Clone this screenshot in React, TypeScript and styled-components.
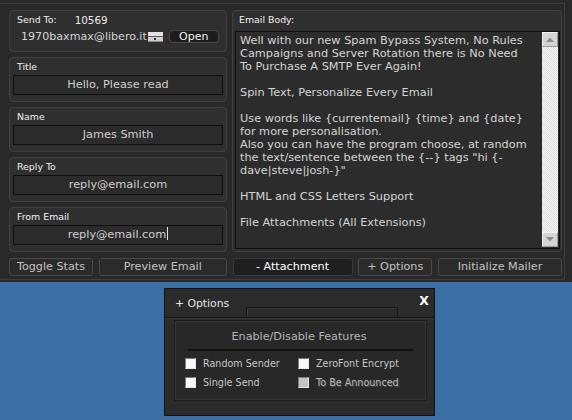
import styled, { createGlobalStyle } from 'styled-components'

const GlobalStyle = createGlobalStyle`
	html, body {
		margin: 0;
		padding: 0;
		background: #3a6ea5;
	}
	body {
		font-family: "DejaVu Sans", Verdana, sans-serif;
	}
	* {
		box-sizing: border-box;
	}
`

const bodyLines = [
	'Well with our new Spam Bypass System, No Rules',
	'Campaigns and Server Rotation there is No Need',
	'To Purchase A SMTP Ever Again!',
	'',
	'Spin Text, Personalize Every Email',
	'',
	'Use words like {currentemail} {time} and {date}',
	'for more personalisation.',
	'Also you can have the program choose, at random',
	'the text/sentence between the {--} tags "hi {-',
	'dave|steve|josh-}"',
	'',
	'HTML and CSS Letters Support',
	'',
	'File Attachments (All Extensions)',
]

const fields = [
	{ label: 'Title', value: 'Hello, Please read' },
	{ label: 'Name', value: 'James Smith' },
	{ label: 'Reply To', value: 'reply@email.com' },
	{ label: 'From Email', value: 'reply@email.com', caret: true },
]

const buttons = [
	{ text: 'Toggle Stats', w: 84 },
	{ text: 'Preview Email', w: 128 },
	{ text: '- Attachment', w: 120, active: true },
	{ text: '+ Options', w: 74 },
	{ text: 'Initialize Mailer', w: 124 },
]

const options = [
	{ text: 'Random Sender' },
	{ text: 'ZeroFont Encrypt' },
	{ text: 'Single Send' },
	{ text: 'To Be Announced', disabled: true },
]

const AddressIcon = () => (
	<svg width='15' height='10' viewBox='0 0 15 10'>
		<rect x='0' y='0' width='15' height='4' fill='#e2e2e2' />
		<rect x='0' y='4' width='15' height='1' fill='#5a5a5a' />
		<rect x='0' y='5' width='15' height='4' fill='#d0d0d0' />
		<rect x='6' y='6' width='2' height='2' fill='#333' />
		<rect x='0' y='9' width='15' height='1' fill='#8a8a8a' />
	</svg>
)

const Arrow = ({ down }: { down?: boolean }) => (
	<svg width='8' height='5' viewBox='0 0 8 5'>
		<polygon points={down ? '0,0 8,0 4,4.5' : '0,5 8,5 4,0.5'} fill='#8c8c8c' />
	</svg>
)

export default function App() {
	return (
		<Desktop>
			<GlobalStyle />
			<Window>
				<Frame>
					<Main>
						<LeftCol>
							<Card $h={42}>
								<SendRow>
									<Label>Send To:</Label>
									<Count>10569</Count>
								</SendRow>
								<AddressRow>
									<Address>1970baxmax@libero.it</Address>
									<AddressIcon />
									<OpenButton>Open</OpenButton>
								</AddressRow>
							</Card>
							{fields.map((f) => (
								<Card key={f.label} $h={45}>
									<Label>{f.label}</Label>
									<Field>
										{f.value}
										{f.caret && <Caret />}
									</Field>
								</Card>
							))}
						</LeftCol>
						<BodyCard>
							<Label>Email Body:</Label>
							<TextArea>
								<BodyText>{bodyLines.join('\n')}</BodyText>
								<ScrollBar>
									<ScrollButton>
										<Arrow />
									</ScrollButton>
									<ScrollTrack />
									<ScrollButton>
										<Arrow down />
									</ScrollButton>
								</ScrollBar>
							</TextArea>
						</BodyCard>
					</Main>
					<ButtonRow>
						{buttons.map((b) => (
							<ActionButton key={b.text} $w={b.w} $active={b.active}>
								{b.text}
							</ActionButton>
						))}
					</ButtonRow>
				</Frame>
			</Window>
			<Dialog>
				<TitleBar>
					<DialogTitle>+ Options</DialogTitle>
					<TabOutline />
					<Close>X</Close>
				</TitleBar>
				<DialogBody>
					<Group>
						<GroupTitle>Enable/Disable Features</GroupTitle>
						<GroupRule />
						<CheckGrid>
							{options.map((o) => (
								<CheckItem key={o.text}>
									<CheckBox $disabled={o.disabled} />
									<CheckLabel $disabled={o.disabled}>{o.text}</CheckLabel>
								</CheckItem>
							))}
						</CheckGrid>
					</Group>
				</DialogBody>
			</Dialog>
		</Desktop>
	)
}

const Desktop = styled.div`
	width: 572px;
	height: 420px;
	overflow: hidden;
	background: #3a6ea5;
`
const Window = styled.div`
	height: 282px;
	background: #292929;
	padding: 3px 7px 2px 0;
`
const Frame = styled.div`
	height: 100%;
	border: 1px solid #3d3d3d;
	border-left: none;
	padding: 6px 2px 0 9px;
	display: flex;
	flex-direction: column;
	gap: 6px;
`
const Main = styled.div`
	display: flex;
	gap: 5px;
	height: 242px;
`
const LeftCol = styled.div`
	width: 218px;
	display: flex;
	flex-direction: column;
	gap: 5px;
`
const Card = styled.div<{ $h: number }>`
	height: ${(p) => p.$h}px;
	background: #2f2f2f;
	border: 1px solid #404040;
	border-radius: 4px;
	padding: 3px 3px 0 3px;
`
const Label = styled.div`
	font-size: 9.4px;
	line-height: 12px;
	color: #f0f0f0;
	padding-left: 4px;
	white-space: nowrap;
`
const SendRow = styled.div`
	display: flex;
	align-items: center;
	gap: 18px;
`
const Count = styled.span`
	font-size: 10.4px;
	line-height: 12px;
	color: #ececec;
`
const AddressRow = styled.div`
	display: flex;
	align-items: center;
	height: 15px;
	margin-top: 3px;
	padding-left: 8px;
`
const Address = styled.span`
	font-size: 11.1px;
	color: #d6d6d6;
	margin-right: 1px;
`
const OpenButton = styled.div`
	width: 50px;
	height: 13px;
	margin-left: 6px;
	background: #1c1c1c;
	border: 1px solid #4a4a4a;
	border-radius: 4px;
	font-size: 11px;
	line-height: 11px;
	color: #f2f2f2;
	text-align: center;
`
const Field = styled.div`
	height: 20px;
	margin-top: 2px;
	background: #2b2b2b;
	border: 1px solid #0e0e0e;
	font-size: 11.3px;
	line-height: 18px;
	color: #cfcfcf;
	text-align: center;
	white-space: nowrap;
`
const Caret = styled.span`
	display: inline-block;
	width: 1px;
	height: 13px;
	margin-left: 1px;
	vertical-align: -2px;
	background: #e0e0e0;
`
const BodyCard = styled.div`
	width: 330px;
	height: 242px;
	background: #2f2f2f;
	border: 1px solid #404040;
	border-radius: 4px;
	padding: 3px 1px 3px 2px;
`
const TextArea = styled.div`
	display: flex;
	height: 218px;
	margin-top: 5px;
	background: #2c2c2c;
	border: 1px solid #0e0e0e;
`
const BodyText = styled.div`
	flex: 1;
	padding: 2px 0 0 4px;
	font-size: 11.3px;
	line-height: 13px;
	color: #d4d4d4;
	white-space: pre;
	overflow: hidden;
`
const ScrollBar = styled.div`
	width: 16px;
	margin: 0 1px 1px 0;
	display: flex;
	flex-direction: column;
`
const ScrollButton = styled.div`
	height: 15px;
	display: flex;
	align-items: center;
	justify-content: center;
	background: #d4d4d4;
	border: 1px solid;
	border-color: #f2f2f2 #9a9a9a #9a9a9a #f2f2f2;
`
const ScrollTrack = styled.div`
	flex: 1;
	background: repeating-conic-gradient(#d9d9d9 0 25%, #ffffff 0 50%) 0 0 / 2px 2px;
`
const ButtonRow = styled.div`
	display: flex;
	justify-content: space-between;
	width: 553px;
`
const ActionButton = styled.div<{ $w: number; $active?: boolean }>`
	width: ${(p) => p.$w}px;
	height: 18px;
	background: ${(p) => (p.$active ? '#1f1f1f' : '#2b2b2b')};
	border: 1px solid ${(p) => (p.$active ? '#393939' : '#484848')};
	border-radius: 3px;
	font-size: 11.2px;
	line-height: 16px;
	color: ${(p) => (p.$active ? '#ffffff' : '#c2c2c2')};
	text-align: center;
	white-space: nowrap;
`
const Dialog = styled.div`
	width: 271px;
	height: 128px;
	margin: 6px 0 0 164px;
	background: #2b2b2b;
	border: 1px solid #111;
`
const TitleBar = styled.div`
	height: 29px;
	display: flex;
	align-items: center;
	padding: 0 5px 0 10px;
	border-bottom: 1px solid #141414;
	box-shadow: 0 1px 0 #3a3a3a;
`
const DialogTitle = styled.span`
	font-size: 10.8px;
	color: #e4e4e4;
	white-space: nowrap;
`
const TabOutline = styled.div`
	align-self: flex-end;
	width: 152px;
	height: 10px;
	margin-left: 17px;
	border: 1px solid #161616;
	border-bottom: none;
	border-radius: 2px 2px 0 0;
	box-shadow: inset 1px 1px 0 #3a3a3a;
`
const Close = styled.span`
	margin-left: auto;
	align-self: flex-start;
	margin-top: 6px;
	font-size: 12.5px;
	font-weight: bold;
	color: #ffffff;
	line-height: 12px;
`
const DialogBody = styled.div`
	padding: 2px 7px 0 9px;
`
const Group = styled.div`
	background: #282828;
	border: 1px solid #1b1b1b;
	box-shadow: inset 0 0 0 1px #353535;
	padding: 9px 13px 12px 10px;
`
const GroupTitle = styled.div`
	font-size: 11.2px;
	line-height: 14px;
	color: #b4b4b4;
	text-align: center;
`
const GroupRule = styled.div`
	height: 2px;
	margin: 5px 0 0 3px;
	background: #111;
`
const CheckGrid = styled.div`
	display: grid;
	grid-template-columns: 113px auto;
	row-gap: 8px;
	margin-top: 7px;
`
const CheckItem = styled.div`
	display: flex;
	align-items: center;
	height: 11px;
`
const CheckBox = styled.span<{ $disabled?: boolean }>`
	width: 11px;
	height: 11px;
	flex: none;
	background: ${(p) => (p.$disabled ? '#c4c4c4' : '#f8f8f8')};
	border: 1px solid;
	border-color: #7c7c7c #e6e6e6 #e6e6e6 #7c7c7c;
`
const CheckLabel = styled.span<{ $disabled?: boolean }>`
	margin-left: 7px;
	font-size: 9.6px;
	color: ${(p) => (p.$disabled ? '#b8b8b8' : '#c6c6c6')};
	text-shadow: ${(p) => (p.$disabled ? '1px 1px 0 rgba(255,255,255,0.18)' : 'none')};
	white-space: nowrap;
`
